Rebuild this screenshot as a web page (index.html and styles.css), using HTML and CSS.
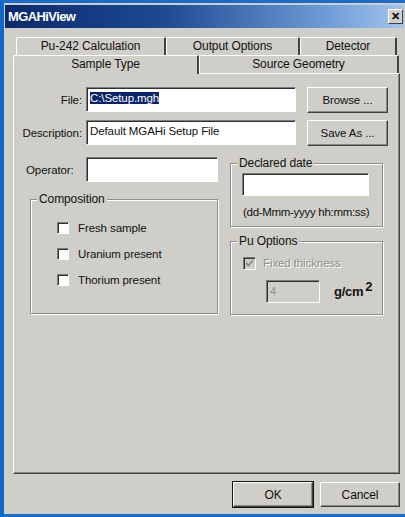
FILE: index.html
```html
<!DOCTYPE html>
<html>
<head>
<meta charset="utf-8">
<title>MGAHiView</title>
<link rel="stylesheet" href="styles.css">
</head>
<body>
<div class="window">
  <div class="titlebar">
    <span class="title">MGAHiView</span>
    <span class="close">&#x2715;</span>
  </div>

  <div class="tabs">
    <div class="tab-row back">
      <div class="tab t-calc">Pu-242 Calculation</div>
      <div class="tab t-out">Output Options</div>
      <div class="tab t-det">Detector</div>
    </div>
    <div class="tab-row front">
      <div class="tab t-sample active">Sample Type</div>
      <div class="tab t-geom">Source Geometry</div>
    </div>
  </div>

  <div class="panel">
    <div class="row first">
      <label class="lbl">File:</label>
      <div class="field wide"><span class="sel">C:\Setup.mgh</span></div>
      <div class="btn side">Browse ...</div>
    </div>
    <div class="row">
      <label class="lbl">Description:</label>
      <div class="field wide">Default MGAHi Setup File</div>
      <div class="btn side">Save As ...</div>
    </div>

    <div class="columns">
      <div class="col-left">
        <div class="op-row">
          <label class="op-lbl">Operator:</label>
          <div class="field op"></div>
        </div>
        <fieldset class="group comp">
          <legend>Composition</legend>
          <div class="group-body comp-body">
            <div class="check"><span class="box"></span>Fresh sample</div>
            <div class="check"><span class="box"></span>Uranium present</div>
            <div class="check"><span class="box"></span>Thorium present</div>
          </div>
        </fieldset>
      </div>

      <div class="col-right">
        <fieldset class="group date">
          <legend>Declared date</legend>
          <div class="group-body date-body">
            <div class="field date-in"></div>
            <div class="hint">(dd-Mmm-yyyy hh:mm:ss)</div>
          </div>
        </fieldset>
        <fieldset class="group pu">
          <legend>Pu Options</legend>
          <div class="group-body pu-body">
            <div class="check disabled">
              <span class="box off">
                <svg width="9" height="9" viewBox="0 0 9 9"><path d="M1 4 L3.5 6.5 L8 1.5" fill="none" stroke="#8a8a8a" stroke-width="1.8"/></svg>
              </span>Fixed thickness
            </div>
            <div class="thick-row">
              <div class="field thick">4</div>
              <span class="unit">g/cm<sup>2</sup></span>
            </div>
          </div>
        </fieldset>
      </div>
    </div>
  </div>

  <div class="footer">
    <div class="btn default">OK</div>
    <div class="btn cancel">Cancel</div>
  </div>
</div>
</body>
</html>
```

FILE: styles.css
```css
html, body {
  margin: 0;
  padding: 0;
}

body {
  width: 405px;
  height: 517px;
  overflow: hidden;
  background: #cfcec8;
  font-family: "Liberation Sans", Arial, sans-serif;
  font-size: 11.5px;
  letter-spacing: -0.1px;
  color: #111;
}

.window {
  box-sizing: border-box;
  height: 517px;
  border-left: 4px solid #1268c4;
  border-top: 3px solid #1a6cc8;
  border-bottom: 3px solid #1a6cc8;
  background: #cfcec8;
  display: flex;
  flex-direction: column;
}

/* caption bar */
.titlebar {
  height: 23px;
  margin: 2px 1px 0 1px;
  background: linear-gradient(to right, #0b2a6e 0%, #1d4a92 40%, #6d9bd6 80%, #a3c4ea 100%);
  display: flex;
  align-items: center;
  justify-content: space-between;
  padding: 0 1px 0 3px;
}

.title {
  color: #fff;
  font-weight: bold;
  font-size: 13px;
  letter-spacing: -0.6px;
}

.close {
  width: 15px;
  height: 15px;
  box-sizing: border-box;
  background: #d4d0c8;
  border-top: 1px solid #fff;
  border-left: 1px solid #fff;
  border-right: 1px solid #404040;
  border-bottom: 1px solid #404040;
  font-size: 11px;
  font-weight: bold;
  line-height: 13px;
  text-align: center;
  color: #000;
  letter-spacing: 0;
}

/* two-row tab strip */
.tabs {
  margin-top: 9px;
}

.tab-row {
  display: flex;
  height: 18px;
}

.tab-row.back {
  margin-left: 12px;
  width: 381px;
}

.tab-row.front {
  margin-left: 9px;
  width: 386px;
}

.tab {
  box-sizing: border-box;
  height: 18px;
  border-top: 1px solid #fff;
  border-left: 1px solid #fff;
  border-right: 2px solid #404040;
  border-radius: 2px 2px 0 0;
  text-align: center;
  line-height: 17px;
  white-space: nowrap;
  font-size: 12px;
}

.t-calc { width: 150px; }
.t-out { width: 134px; }
.t-det { width: 97px; }
.t-sample { width: 186px; }
.t-geom { width: 200px; }

.tab.active {
  height: 19px;
  margin-bottom: -1px;
  background: #cfcec8;
  position: relative;
  z-index: 1;
}

/* property page */
.panel {
  box-sizing: border-box;
  margin-left: 9px;
  width: 387px;
  height: 401px;
  border-top: 1px solid #fff;
  border-left: 1px solid #fff;
  border-right: 1px solid #404040;
  border-bottom: 1px solid #404040;
  box-shadow: inset -1px -1px 0 #888;
  display: flex;
  flex-direction: column;
}

.row {
  display: flex;
  align-items: center;
  height: 25px;
  margin-top: 8px;
}

.row.first {
  margin-top: 13px;
}

.lbl {
  width: 68px;
  text-align: right;
  margin-right: 4px;
}

.field {
  box-sizing: border-box;
  background: #fff;
  border-top: 1px solid #7c7c7c;
  border-left: 1px solid #7c7c7c;
  border-right: 1px solid #fff;
  border-bottom: 1px solid #fff;
  box-shadow: inset 1px 1px 0 #303030;
  padding: 2px 3px;
  line-height: 16px;
}

.field.wide {
  width: 210px;
  height: 25px;
}

.sel {
  background: #0a246a;
  color: #fff;
}

.btn {
  box-sizing: border-box;
  background: #cfcec8;
  border-top: 1px solid #fff;
  border-left: 1px solid #fff;
  border-right: 1px solid #404040;
  border-bottom: 1px solid #404040;
  box-shadow: inset -1px -1px 0 #888;
  display: flex;
  align-items: center;
  justify-content: center;
}

.btn.side {
  width: 81px;
  height: 26px;
  margin-left: 11px;
}

.columns {
  display: flex;
}

.col-left {
  width: 192px;
  margin-left: 12px;
}

.op-row {
  display: flex;
  align-items: center;
  margin-top: 12px;
}

.op-lbl {
  width: 60px;
}

.field.op {
  width: 132px;
  height: 25px;
}

/* etched group boxes */
.group {
  margin: 0;
  padding: 0;
  box-sizing: border-box;
  border: 1px solid #8e8e8e;
  box-shadow: 1px 1px 0 #fff, inset 1px 1px 0 #fff;
}

.group legend {
  margin-left: 6px;
  padding: 0 2px;
  background: #cfcec8;
  line-height: 14px;
  font-size: 12px;
}

.comp {
  margin-left: 4px;
  margin-top: 10px;
  width: 188px;
  height: 122px;
}

.comp-body {
  padding: 9px 0 0 26px;
}

.check {
  display: flex;
  align-items: center;
  height: 26px;
}

.box {
  box-sizing: border-box;
  width: 12px;
  height: 12px;
  background: #fff;
  border-top: 1px solid #7c7c7c;
  border-left: 1px solid #7c7c7c;
  border-right: 1px solid #fff;
  border-bottom: 1px solid #fff;
  box-shadow: inset 1px 1px 0 #303030;
  margin-right: 9px;
  display: flex;
  align-items: center;
  justify-content: center;
}

.box.off {
  width: 13px;
  height: 13px;
  background: #cfcec8;
  margin-right: 7px;
}

.col-right {
  margin-left: 12px;
  width: 153px;
}

.date {
  margin-top: 11px;
  height: 71px;
}

.date-body {
  padding: 3px 0 0 11px;
}

.field.date-in {
  width: 127px;
  height: 23px;
}

.hint {
  margin-top: 10px;
  padding-left: 1px;
  font-size: 11.5px;
  letter-spacing: -0.3px;
}

.pu {
  margin-top: 7px;
  height: 81px;
}

.pu-body {
  padding: 4px 0 0 12px;
}

.check.disabled {
  color: #8e8e8e;
  text-shadow: 1px 1px 0 #fff;
  height: 22px;
}

.thick-row {
  display: flex;
  align-items: center;
  margin-top: 6px;
  margin-left: 23px;
}

.field.thick {
  width: 54px;
  height: 23px;
  background: #cfcec8;
  color: #8e8e8e;
  font-size: 11px;
}

.unit {
  margin-left: 14px;
  font-size: 13px;
  font-weight: bold;
  letter-spacing: -0.3px;
}

.unit sup {
  font-size: 13px;
  vertical-align: 5px;
  margin-left: 2px;
  line-height: 0;
}

/* OK / Cancel */
.footer {
  display: flex;
  justify-content: flex-end;
  margin-top: 8px;
  margin-right: 5px;
  gap: 7px;
}

.btn.default,
.btn.cancel {
  width: 80px;
  height: 25px;
  font-size: 12px;
}

.btn.default {
  outline: 1px solid #111;
  width: 80px;
}
```
